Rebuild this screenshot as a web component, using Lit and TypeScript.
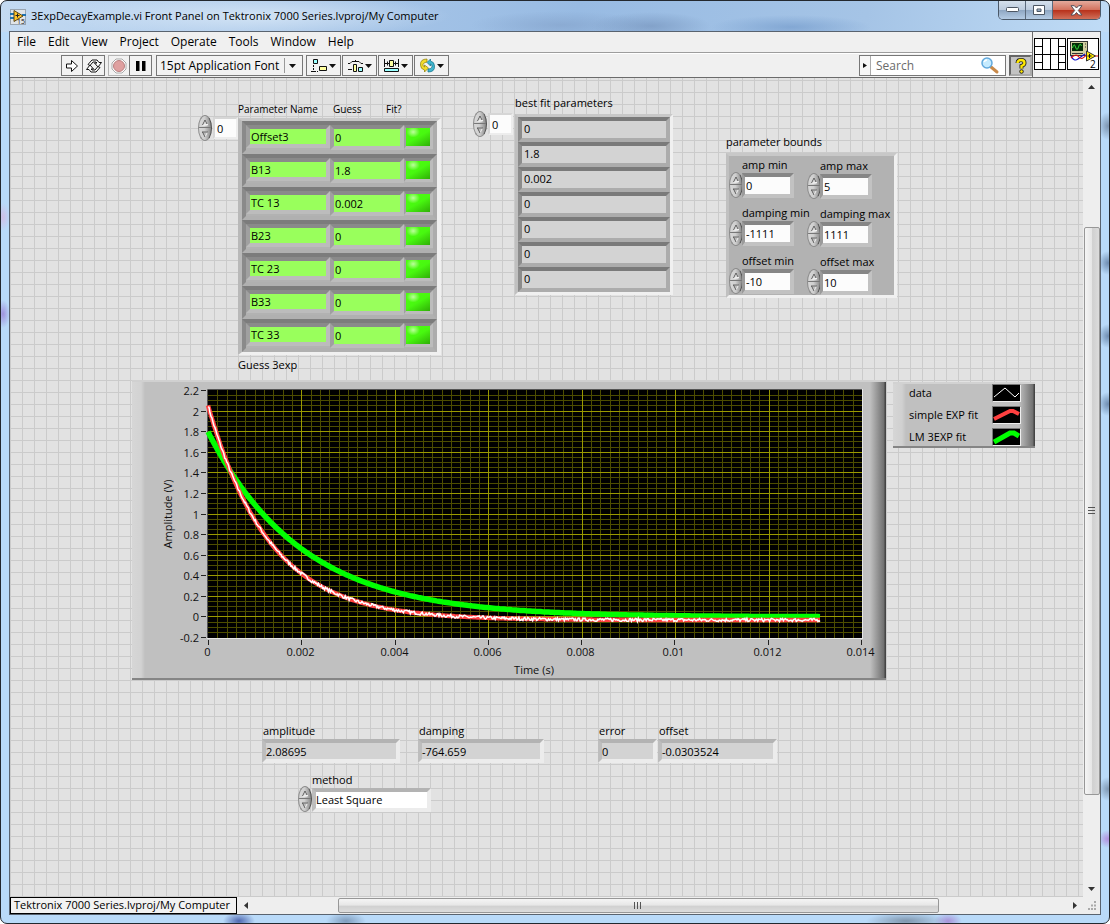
import { LitElement, html, css, svg } from "lit";
import { customElement, property } from "lit/decorators.js";

/* ---------- shared control looks ---------- */
const controls = css`
  * { box-sizing: border-box; }
  button, input, select, output, label, a {
    font: inherit;
    color: inherit;
  }
  button { padding: 0; margin: 0; border: 0; background: none; display: block; }
  input, select { appearance: none; border-radius: 0; margin: 0; outline: none; min-width: 0; }
`;

/* ---------- increment / decrement knob ---------- */
@customElement("spin-knob")
export class SpinKnob extends LitElement {
  @property() name = "";
  static styles = [controls, css`
    :host { display: block; width: 14px; height: 26px; flex: none; }
    .knob {
      width: 14px; height: 26px; border-radius: 50%;
      background: linear-gradient(90deg, #d8d8d8, #cfcfcf 45%, #8a8a8a);
      border: 1px solid #8b8b8b;
      border-right-color: #4e4e4e;
      overflow: hidden;
    }
    button { width: 12px; height: 12px; }
    .up { border-bottom: 1px solid #777; }
    svg { display: block; margin: auto; }
  `];
  render() {
    return html`<div class="knob">
      <button class="up" aria-label="Increase ${this.name}">
        <svg width="8" height="8"><path d="M1.5 7 4 2l2.500 5z" fill="#d9d9d9" stroke="#fff" /><path d="M1.500 7 4 2l2 4" fill="none" stroke="#555" /></svg>
      </button>
      <button aria-label="Decrease ${this.name}">
        <svg width="8" height="8"><path d="M1.500 2h5L4 7z" fill="#bbb" stroke="#eee" /><path d="M1 2h6M1.500 2 4 7" fill="none" stroke="#555" /></svg>
      </button>
    </div>`;
  }
}

/* ---------- knob with a numeric box (array index) ---------- */
@customElement("index-box")
export class IndexBox extends LitElement {
  @property() name = "";
  static styles = [controls, css`
    :host { display: flex; align-items: center; gap: 1px; }
    input {
      width: 25px; height: 22px; padding: 0 0 0 2px;
      background: #fcfcfc;
      border: 2px solid #d6d6d6;
      border-right-color: #ededed; border-bottom-color: #ededed;
    }
  `];
  render() {
    return html`<spin-knob name=${this.name}></spin-knob><input aria-label=${this.name} value="0" />`;
  }
}

/* ---------- waveform graph ---------- */
const PLOT = { x: 76, y: 10, w: 654, h: 248 };
const xPos = (t: number) => PLOT.x + (t / 0.014) * PLOT.w;
const yPos = (v: number) => PLOT.y + 0.5 + ((2.2 - v) / 2.4) * (PLOT.h - 1);
const T_END = 0.0131;

function curve(fn: (t: number) => number, steps: number): string {
  let d = "";
  for (let i = 0; i <= steps; i++) {
    const t = (T_END * i) / steps;
    d += `${i ? "L" : "M"}${xPos(t).toFixed(1)} ${yPos(fn(t)).toFixed(1)}`;
  }
  return d;
}
const simpleFit = (t: number) => 2.08695 * Math.exp(-764.659 * t) - 0.0303524;
const lmFit = (t: number) => 1.8 * Math.exp(-t / 0.002);
let seed = 7;
const noise = () => {
  seed = (seed * 16807) % 2147483647;
  return (seed / 2147483647 - 0.5) * 0.032;
};

@customElement("decay-graph")
export class DecayGraph extends LitElement {
  static styles = css`
    :host { display: block; }
    .case {
      width: 754px;
      background: linear-gradient(90deg, #d6d6d6, #d2d2d2 9px, #c0c0c0 13px, #c0c0c0 738px, #6f6f6f 752px, #444 753px);
      border-top: 2px solid #d0d0d0;
      border-bottom: 2px solid #858585;
    }
    svg { display: block; margin-top: -2px; margin-bottom: -2px; }
    text { font-size: 11px; fill: #111; }
  `;
  render() {
    const grid: unknown[] = [];
    for (let i = 0; i <= 70; i++) {
      const x = Math.round(PLOT.x + (i * PLOT.w) / 70) + 0.5;
      if (i % 10) grid.push(svg`<path d="M${x} ${PLOT.y}v${PLOT.h}" stroke="#4d4d00" />`);
    }
    for (let j = 1; j < 48; j++) {
      const y = Math.floor(yPos(2.2 - j * 0.05)) + 0.5;
      if (j % 4) grid.push(svg`<path d="M${PLOT.x} ${y}h${PLOT.w}" stroke="#4d4d00" />`);
    }
    for (let i = 1; i < 7; i++) {
      const x = Math.round(PLOT.x + (i * PLOT.w) / 7) + 0.5;
      grid.push(svg`<path d="M${x} ${PLOT.y}v${PLOT.h}" stroke="#999900" />`);
    }
    for (let j = 1; j < 12; j++) {
      const y = Math.floor(yPos(2.2 - j * 0.2)) + 0.5;
      grid.push(svg`<path d="M${PLOT.x} ${y}h${PLOT.w}" stroke="#999900" />`);
    }
    const yTicks = ["2.2", "2", "1.8", "1.6", "1.4", "1.2", "1", "0.8", "0.6", "0.4", "0.2", "0", "-0.2"];
    const xTicks = ["0", "0.002", "0.004", "0.006", "0.008", "0.01", "0.012", "0.014"];
    seed = 7;
    return html`<div class="case"><svg width="754" height="300" role="img" aria-label="Amplitude against time">
      <rect x=${PLOT.x - 1} y=${PLOT.y - 1} width=${PLOT.w + 2} height=${PLOT.h + 2} fill="#e6e6e6" />
      <path d="M${PLOT.x - 0.5} ${PLOT.y + PLOT.h}V${PLOT.y - 0.5}H${PLOT.x + PLOT.w}" fill="none" stroke="#555" />
      <rect x=${PLOT.x} y=${PLOT.y} width=${PLOT.w} height=${PLOT.h} fill="#000" />
      <g shape-rendering="crispEdges">${grid}</g>
      <path d=${curve(lmFit, 300)} fill="none" stroke="#00ff00" stroke-width="5.500" />
      <path d=${curve(simpleFit, 300)} fill="none" stroke="#ff4040" stroke-width="4.500" />
      <path d=${curve((t) => simpleFit(t) + noise(), 620)} fill="none" stroke="#fff" stroke-width="1.500" />
      ${yTicks.map((t, i) => {
        const y = Math.floor(yPos(2.2 - i * 0.2)) + 0.5;
        return svg`<path d="M69 ${y}h5" stroke="#222" /><text x="67" y=${y + 4} text-anchor="end">${t}</text>`;
      })}
      ${xTicks.map((t, i) => {
        const x = Math.round(PLOT.x + (i * (PLOT.w - 1)) / 7) + 0.5;
        return svg`<path d="M${x} 260v5" stroke="#222" /><text x=${x - 1} y="276" text-anchor="middle">${t}</text>`;
      })}
      <text x="402" y="294" text-anchor="middle">Time (s)</text>
      <text transform="translate(40 134) rotate(-90)" text-anchor="middle">Amplitude (V)</text>
    </svg></div>`;
  }
}

/* ---------- front panel ---------- */
@customElement("front-panel")
export class FrontPanel extends LitElement {
  static styles = [controls, css`
    :host {
      display: block; flex: 1; min-width: 0; overflow: hidden;
      background-color: #e2e2e2;
      background-image: linear-gradient(90deg, #cbcbcb 1px, transparent 1px), linear-gradient(#cbcbcb 1px, transparent 1px);
      background-size: 12px 12px;
      background-position: 0 2px;
    }
    .row { display: flex; align-items: flex-start; }
    .caption { display: block; height: 16px; line-height: 16px; white-space: nowrap; }

    .top { padding: 17px 0 0 188px; }
    .guess { display: flex; margin-top: 6px; width: 275px; }
    .guess index-box { margin-top: 14px; align-self: flex-start; }
    .heads { display: grid; grid-template-columns: 95px 53px auto; margin-bottom: 1px; font-size: 10px; }
    .bestfit { display: flex; gap: 2px; width: 253px; }
    .bestfit index-box { margin-top: 16px; align-self: flex-start; }
    .bestfit .caption, .bounds > .caption { margin-bottom: 3px; }

    .frame {
      border: 3px solid #d4d4d4;
      border-left-color: #c0c0c0; border-top-color: #c8c8c8;
      border-right-color: #f0f0f0; border-bottom-color: #f0f0f0;
      background: #b2b2b2;
    }
    .frame.wide { border-left-width: 4px; border-left-color: #b9b9b9; border-right-width: 4px; }
    .cluster {
      display: flex; align-items: flex-start; height: 33px; width: 195px;
      border: 4px solid #acacac;
      border-top-color: #7c7c7c; border-left-color: #8a8a8a;
      border-bottom-color: #b0b0b0;
    }
    .cluster input {
      border: 4px solid #bcbcbc;
      border-top-color: #8a8a8a; border-left-color: #a0a0a0;
    }
    .text, .num { background: #99ff5c; padding: 0 0 0 1px; line-height: 14px; }
    .text { width: 84px; height: 23px; }
    .num { width: 74px; height: 25px; }
    .cluster .led {
      width: 29px; height: 24px; border-width: 3px 3px 3px 2px;
      background:
        radial-gradient(ellipse at 30% 22%, rgba(200, 255, 170, 0.9), transparent 28%),
        linear-gradient(150deg, #4dff10, #48f810 50%, #2fae06);
    }
    .after { margin-top: 2px; }

    .result {
      display: block; width: 152px; height: 25px; line-height: 16px; padding-left: 2px;
      border: 4px solid #acacac; border-top-color: #7a7a7a; border-left-color: #8c8c8c;
      background: #d3d3d3;
    }

    .bounds { margin-top: 39px; }
    .pairs {
      display: grid; grid-template-columns: 78px 87px; align-items: start;
      height: 145px; padding-top: 1px; grid-auto-rows: 48px;
    }
    .pairs > .field:nth-child(even) { margin-top: 1px; }
    .field { display: grid; grid-template-columns: 13px 52px; }
    .field .caption { grid-column: 2; }
    .field spin-knob { margin-top: -1px; }
    .field input {
      height: 25px; width: 52px; padding: 0 0 0 1px; background: #fcfcfc;
      border: 4px solid #c2c2c2; border-top-color: #868686; border-left: 3px solid #9b9b9b;
    }

    .middle { padding: 7px 0 0 122px; gap: 7px; }
    .legend {
      margin-top: 2px; width: 142px; height: 66px; padding: 0 14px 0 16px;
      display: flex; flex-direction: column;
      background: linear-gradient(90deg, #d6d6d6, #d0d0d0 9px, #c0c0c0 13px, #c0c0c0 126px, #707070 140px, #444 141px);
      border-top: 2px solid #d2d2d2; border-bottom: 2px solid #858585;
    }
    .plot { display: flex; justify-content: space-between; align-items: center; height: 22px; padding-bottom: 4px; }
    .plot svg { display: block; border: 1px solid #777; border-right-color: #eee; border-bottom-color: #eee; background: #000; flex: none; }

    .readouts { padding: 43px 0 0 252px; }
    .readout .caption { padding-left: 1px; }
    .sink {
      display: block; height: 24px; line-height: 17px;
      border: 4px solid #ececec; border-top-color: #b3b3b3; border-left-color: #bdbdbd;
      background: #d3d3d3; white-space: nowrap;
    }
    .amp { width: 138px; margin-right: 18px; }
    .damp { width: 126px; margin-right: 54px; }
    .err { width: 59px; margin-right: 1px; }
    .off { width: 119px; }
    .method { display: grid; grid-template-columns: 14px 119px; padding: 9px 0 0 288px; }
    .method .caption { grid-column: 2; }
    .method spin-knob { margin-top: -2px; }
    .method select {
      height: 24px; padding: 0; background: #fff;
      border: 4px solid #ececec; border-top-color: #b3b3b3; border-left-color: #bdbdbd;
    }
  `];

  private field(id: string, name: string, value: string) {
    return html`<div class="field">
      <label class="caption" for=${id}>${name}</label>
      <spin-knob name=${name}></spin-knob><input id=${id} value=${value} />
    </div>`;
  }
  private readout(cls: string, name: string, value: string) {
    return html`<div class="readout ${cls}">
      <label class="caption" for=${cls}>${name}</label><output class="sink" id=${cls}>${value}</output>
    </div>`;
  }

  render() {
    const params = [["Offset3", "0"], ["B13", "1.8"], ["TC 13", "0.002"], ["B23", "0"], ["TC 23", "0"], ["B33", "0"], ["TC 33", "0"]];
    const best = ["0", "1.8", "0.002", "0", "0", "0", "0"];
    return html`
      <div class="row top">
        <section class="guess">
          <index-box name="Guess index"></index-box>
          <div>
            <div class="heads">
              <span class="caption" id="h-name">Parameter Name</span>
              <span class="caption" id="h-guess">Guess</span>
              <span class="caption" id="h-fit">Fit?</span>
            </div>
            <div class="frame wide">
              ${params.map(([n, g]) => html`<div class="cluster">
                <input class="text" aria-labelledby="h-name" value=${n} />
                <input class="num" aria-labelledby="h-guess" value=${g} />
                <input class="led" type="checkbox" aria-labelledby="h-fit" checked />
              </div>`)}
            </div>
            <span class="caption after">Guess 3exp</span>
          </div>
        </section>

        <section class="bestfit">
          <index-box name="Best fit index"></index-box>
          <div>
            <span class="caption">best fit parameters</span>
            <div class="frame">${best.map((v) => html`<output class="result">${v}</output>`)}</div>
          </div>
        </section>

        <section class="bounds">
          <span class="caption">parameter bounds</span>
          <div class="frame pairs">
            ${this.field("amin", "amp min", "0")}${this.field("amax", "amp max", "5")}
            ${this.field("dmin", "damping min", "-1111")}${this.field("dmax", "damping max", "1111")}
            ${this.field("omin", "offset min", "-10")}${this.field("omax", "offset max", "10")}
          </div>
        </section>
      </div>

      <div class="row middle">
        <decay-graph></decay-graph>
        <div class="legend">
          <div class="plot"><span>data</span>
            <svg width="29" height="18"><path d="M1 12 12 3l10 9 4-4" fill="none" stroke="#fff" /></svg></div>
          <div class="plot"><span>simple EXP fit</span>
            <svg width="29" height="18"><path d="M1 12 17 4h3l6 3" fill="none" stroke="#ff4040" stroke-width="4" /></svg></div>
          <div class="plot"><span>LM 3EXP fit</span>
            <svg width="29" height="18"><path d="M1 13 17 4h4l5 3" fill="none" stroke="#00ff00" stroke-width="5" /></svg></div>
        </div>
      </div>

      <div class="row readouts">
        ${this.readout("amp", "amplitude", "2.08695")}
        ${this.readout("damp", "damping", "-764.659")}
        ${this.readout("err", "error", "0")}
        ${this.readout("off", "offset", "-0.0303524")}
      </div>
      <div class="method">
        <label class="caption" for="method">method</label>
        <spin-knob name="method"></spin-knob>
        <select id="method"><option>Least Square</option><option>Least Absolute Residual</option><option>Bisquare</option></select>
      </div>`;
  }
}

/* ---------- application window ---------- */
@customElement("app-root")
export class AppRoot extends LitElement {
  static styles = [controls, css`
    :host {
      display: flex; flex-direction: column; height: 100vh; min-width: 0;
      font: 11px/16px "Open Sans", "Noto Sans", sans-serif;
      color: #000; box-sizing: border-box;
      padding: 0 8px 8px;
      border: 1px solid #23282e;
      border-radius: 7px;
      background:
        radial-gradient(ellipse 10px 14px at 1107px 125px, #7d95b0, transparent),
        radial-gradient(ellipse 10px 12px at 1107px 262px, #6f8db0, transparent),
        radial-gradient(ellipse 10px 12px at 1107px 335px, #6f8db0, transparent),
        radial-gradient(ellipse 10px 12px at 1107px 403px, #6f8db0, transparent),
        radial-gradient(ellipse 10px 12px at 1107px 788px, #8098b3, transparent),
        radial-gradient(ellipse 10px 9px at 1107px 838px, #b190dd, transparent),
        radial-gradient(ellipse 7px 14px at 2px 313px, #9f93dd, transparent),
        radial-gradient(ellipse 7px 14px at 2px 216px, #cfc0e6, transparent),
        radial-gradient(ellipse 16px 9px at 238px 920px, #5068b0, transparent),
        radial-gradient(ellipse 20px 9px at 345px 920px, #7f9cbc, transparent),
        radial-gradient(ellipse 40px 9px at 905px 920px, #8096ad, transparent),
        radial-gradient(ellipse 14px 8px at 947px 920px, #a892d8, transparent),
        radial-gradient(ellipse 200px 22px at 250px 15px, rgba(214, 230, 246, 0.9), transparent),
        radial-gradient(ellipse 60px 14px at 650px 25px, rgba(120, 150, 190, 0.7), transparent),
        radial-gradient(ellipse 90px 14px at 560px 24px, rgba(130, 160, 200, 0.6), transparent),
        radial-gradient(ellipse 80px 12px at 790px 26px, rgba(110, 150, 200, 0.6), transparent),
        linear-gradient(100deg, #c3daf2 0, #a8c6e8 30%, #98bbe3 52%, #a5c4e6 78%, #c0dcf6 100%) 0 0 / 100% 31px no-repeat,
        #b9daf9;
    }
    .title { display: flex; align-items: flex-start; height: 30px; flex: none; }
    .title svg { display: block; }
    .vi { margin: 8px 5px 0 1px; }
    .title h1 { margin: 7px 0 0; font-size: 11px; line-height: 16px; font-weight: 400; white-space: nowrap; flex: 1; }
    .wbtns { display: flex; height: 19px; border: 1px solid #4a5868; border-top: 0; border-radius: 0 0 5px 5px; overflow: hidden; }
    .wbtns button {
      width: 27px; border-right: 1px solid #5b6a7c; display: grid; place-items: center;
      background: linear-gradient(#d5e0ec, #bccbdd 48%, #8fa7c3 52%, #b4cbe4);
    }
    .wbtns .close { width: 47px; border-right: 0; background: linear-gradient(#e4aa9c, #d4735f 48%, #b8321c 52%, #d0705a); }

    .client { flex: 1; min-height: 0; display: flex; flex-direction: column; border: 1px solid #59636f; background: #f0f0f0; }
    .head { display: flex; height: 46px; flex: none; border-bottom: 1px solid #6b6b6b; }
    .bars { flex: 1; min-width: 0; border-right: 1px solid #6b6b6b; }
    .menu { display: flex; height: 21px; padding-left: 7px; gap: 12px; border-bottom: 1px solid #9d9d9d; font-size: 12px; }
    .menu button { line-height: 18px; }
    .tools { display: flex; height: 24px; padding: 1px 0 0 51px; align-items: flex-start; border-top: 1px solid #fff; }
    .tools button, .font, .find { height: 21px; border: 1px solid #777; background: #f2f2f2; display: flex; align-items: center; justify-content: center; }
    .tools button { width: 22px; }
    .tools .second { margin-left: -1px; width: 23px; }
    .tools .off { margin-left: 3px; border-color: #b5b5b5; }
    .font { margin: 0 3px 0 4px; width: 147px; position: relative; }
    .font select { width: 100%; height: 19px; border: 0; background: none; padding: 0 0 0 3px; font-size: 12px; }
    .font svg { position: absolute; right: 5px; top: 2px; pointer-events: none; }
    .tools .drop { width: 35px; margin-right: 1px; gap: 1px; }
    .find { margin-left: auto; width: 147px; justify-content: flex-start; background: #f6f6f6; }
    .find input { flex: 1; height: 19px; border: 0; border-left: 1px solid #aaa; background: #fff; font-size: 12px; padding: 0 0 0 5px; margin-left: 2px; }
    .find input::placeholder { color: #6b6b6b; opacity: 1; }
    .find .glass { background: #fff; height: 19px; width: 26px; }
    .tools .help { margin-left: 3px; width: 23px; background: #c3c3c3; border: 2px solid #666; border-right-color: #aaa; border-bottom-color: #aaa; }
    .panes { display: flex; gap: 1px; padding: 6px 0 0 1px; width: 67px; }
    .panes svg { display: block; }

    .body { flex: 1; min-height: 0; display: flex; }
    .vbar { width: 17px; flex: none; display: flex; flex-direction: column; align-items: center; background: #eee; }
    .vbar button { height: 17px; width: 17px; display: grid; place-items: center; }
    .vtrack { flex: 1; display: flex; flex-direction: column; width: 16px; }
    .space-a { flex: 132; }
    .space-b { flex: 85; }
    .vthumb {
      flex: 566; border: 1px solid #979797; border-radius: 2px; display: grid; place-items: center;
      background: linear-gradient(90deg, #f5f5f5, #e6e6e6 48%, #d0d0d0 54%, #dcdcdc);
    }
    .foot { display: flex; height: 17px; flex: none; background: #eee; }
    .project { border: 1px solid #000; width: 227px; padding-left: 3px; line-height: 14px; white-space: nowrap; text-decoration: none; background: #f2f2f2; }
    .foot button { width: 17px; display: grid; place-items: center; }
    .htrack { flex: 1; display: flex; padding: 1px 0; }
    .hl { flex: 84; }
    .hr { flex: 128; }
    .hthumb {
      flex: 602; border: 1px solid #979797; border-radius: 2px; display: grid; place-items: center;
      background: linear-gradient(#f5f5f5, #e6e6e6 48%, #d0d0d0 54%, #dcdcdc);
    }
    .grip { width: 17px; display: grid; place-items: center; }
  `];

  private caret() {
    return html`<svg width="7" height="4"><path d="M0 0h7L3.500 4z" fill="#111" /></svg>`;
  }

  render() {
    const menus = ["File", "Edit", "View", "Project", "Operate", "Tools", "Window", "Help"];
    return html`
      <header class="title">
        <svg class="vi" width="16" height="16">
          <rect x=".5" y=".5" width="15" height="15" fill="#dfe4e8" stroke="#9aa5b0" /><path d="M0 5h4M0 9h4M12 6h4" stroke="#1d74b5" stroke-width="2" />
          <path d="M4 1.500v11l9-5.500z" fill="#ffc629" stroke="#5a4413" /><path d="M5.500 6.500h4M7.500 4.500v4" stroke="#222" />
          <text x="7" y="15" font-size="7" fill="#111">15</text>
        </svg>
        <h1>3ExpDecayExample.vi Front Panel on Tektronix 7000 Series.lvproj/My Computer</h1>
        <div class="wbtns">
          <button aria-label="Minimize"><svg width="13" height="6"><rect x=".5" y=".5" width="12" height="4" rx="1" fill="#fff" stroke="#4c5663" /></svg></button>
          <button aria-label="Maximize"><svg width="13" height="11"><path fill-rule="evenodd" d="M.5.5h11v9H.5zM4 4v2.500h4V4z" fill="#fff" stroke="#4c5663" /></svg></button>
          <button class="close" aria-label="Close"><svg width="13" height="11"><path d="M1 .7h3.300L6.500 3 8.700.7H12L8.300 5.500 12 10H8.700L6.500 7.500 4.300 10H1l3.700-4.500z" fill="#fff" stroke="#54505a" /></svg></button>
        </div>
      </header>
      <main class="client">
        <div class="head">
          <div class="bars">
            <nav class="menu">${menus.map((m) => html`<button>${m}</button>`)}</nav>
            <div class="tools">
              <button aria-label="Run"><svg width="14" height="14"><path d="M1.500 5h5V1.500L12.500 7l-6 5.500V9h-5z" fill="#fff" stroke="#111" /></svg></button>
              <button class="second" aria-label="Run continuously"><svg width="18" height="16">
                <path d="M3 6.500 7 2h5l2 2.500h2.500L13 9 9.500 5H12l-1-1H8L5 7.500z" fill="#fff" stroke="#111" />
                <path d="M15 9.500 11 14H6l-2-2.500H1.500L5 7l3.500 4H6l1 1h3l3-3.500z" fill="#fff" stroke="#111" /></svg></button>
              <button class="off" aria-label="Abort"><svg width="16" height="16"><path d="M5 1h6l4 4v6l-4 4H5l-4-4V5z" fill="#fff" stroke="#aaa" /><circle cx="8" cy="8" r="5.500" fill="#dfa0a0" stroke="#b98080" /></svg></button>
              <button class="second" aria-label="Pause"><svg width="10" height="12"><path d="M0 1h3.500v10H0zM6 1h3.500v10H6z" fill="#000" /></svg></button>
              <div class="font">
                <select aria-label="Text settings"><option>15pt Application Font</option></select>
                <svg width="13" height="15"><path d="M.5 0v15" stroke="#999" /><path d="M5 6h7l-3.500 4z" fill="#111" /></svg>
              </div>
              <button class="drop" aria-label="Align"><svg width="17" height="14">
                <path d="M2.500.5h4v4h-4z" fill="#9ff" stroke="#111" /><path d="M8.500 7.500h7v4h-7z" fill="#ffffa0" stroke="#111" /><path d="M2.500 6v7M0 12.500h7" stroke="#111" stroke-dasharray="2 1" /></svg>${this.caret()}</button>
              <button class="drop" aria-label="Distribute"><svg width="17" height="14">
                <path d="M1 4.500h2l2-2h7l2 2h2M8.500 1v2" fill="none" stroke="#111" /><path d="M6.500 5.500h3v7h-3z" fill="#ffffa0" stroke="#111" /><path d="M11.500 8.500h4v4h-4z" fill="#9ff" stroke="#111" /><path d="M1 10.500h4" stroke="#111" /></svg>${this.caret()}</button>
              <button class="drop" aria-label="Resize"><svg width="17" height="14">
                <path d="M1.500 0v8M15.500 0v8M2 4.500h4M11 4.500h4M4.500 2.500v4M12.500 2.500v4" stroke="#111" /><path d="M6.500 1.500h4v6h-4z" fill="#ffffa0" stroke="#111" /><path d="M1.500 9.500h14v3h-14z" fill="#9ff" stroke="#111" /></svg>${this.caret()}</button>
              <button class="drop" aria-label="Reorder"><svg width="17" height="15">
                <path d="M8 1Q1 1 1.500 7q0 4 4 5v2l4-4-4-3v2Q3.500 8 4 6.500 5 4 8 4z" fill="#f2dc2c" stroke="#8b7b00" stroke-width=".7" />
                <path d="M9 14q7 0 6.500-6 0-4-4-5V1L8 4.500 11.500 8V6q2 .5 1.500 3-.500 2-4 2z" fill="#3fb6cf" stroke="#136f86" stroke-width=".7" /></svg>${this.caret()}</button>
              <div class="find">
                <svg width="8" height="9"><path d="M3 2v5l4-2.500z" fill="#111" /></svg>
                <input type="search" aria-label="Search" placeholder="Search" />
                <svg class="glass" viewBox="0 0 26 19"><path d="m12 11 6 5" stroke="#c98a4a" stroke-width="3" stroke-linecap="round" /><circle cx="8" cy="7" r="5" fill="#c5ebff" stroke="#62a9dd" stroke-width="1.500" /><path d="M5 6q1-2 3-2" fill="none" stroke="#fff" stroke-width="1.500" /></svg>
              </div>
              <button class="help" aria-label="Context help"><svg width="14" height="16"><path d="M3.500 5Q3.500 2 7 2t3.500 3Q10.500 7 7.500 8v2.500" fill="none" stroke="#222" stroke-width="4" /><path d="M3.500 5Q3.500 2 7 2t3.500 3Q10.500 7 7.500 8v2.500" fill="none" stroke="#ffe800" stroke-width="2.300" /><circle cx="7.500" cy="13.500" r="1.800" fill="#ffe800" stroke="#222" /></svg></button>
            </div>
          </div>
          <div class="panes">
            <svg width="32" height="32" shape-rendering="crispEdges"><path d="M.5.5h31v31H.5zM8.500 0v32M16.500 0v32M24.500 0v32M0 16.500h32M0 8.500h8M0 24.500h8M24 8.500h8M24 24.500h8" fill="#fff" stroke="#000" /></svg>
            <svg width="32" height="32">
              <rect x=".5" y=".5" width="31" height="31" fill="#fff" stroke="#000" />
              <rect x="3.500" y="3.500" width="17" height="14" fill="#d2cfa0" stroke="#333" /><rect x="5" y="5" width="11" height="8" fill="#042c08" />
              <path d="M5.500 10Q7 4 8.500 9t3 0 3-1" fill="none" stroke="#35e03c" /><path d="M18 6h1M18 9h1M5 15.500h11" stroke="#333" />
              <path d="M4 18q3 6 7 3t7-5" fill="none" stroke="#11c" stroke-width="1.200" /><path d="M4 20q5-5 8-1t8-3M27 18h4" fill="none" stroke="#d11" stroke-width="1.200" />
              <path d="M19.500 13v10l9-5z" fill="#ffe800" stroke="#333" /><path d="M20.500 18h4M22.500 16v4" stroke="#111" />
              <text x="23" y="30" font-size="10" fill="#000">2</text>
            </svg>
          </div>
        </div>
        <div class="body">
          <front-panel></front-panel>
          <div class="vbar">
            <button aria-label="Scroll up"><svg width="7" height="4"><path d="M0 4h7L3.500 0z" fill="#333" /></svg></button>
            <div class="vtrack"><div class="space-a"></div>
              <div class="vthumb"><svg width="7" height="8"><path d="M0 .5h7M0 3.500h7M0 6.500h7" stroke="#555" /></svg></div>
              <div class="space-b"></div></div>
            <button aria-label="Scroll down"><svg width="7" height="4"><path d="M0 0h7L3.500 4z" fill="#333" /></svg></button>
          </div>
        </div>
        <footer class="foot">
          <a class="project" href="#project">Tektronix 7000 Series.lvproj/My Computer</a>
          <button aria-label="Scroll left"><svg width="4" height="7"><path d="M4 0v7L0 3.500z" fill="#333" /></svg></button>
          <div class="htrack"><div class="hl"></div>
            <div class="hthumb"><svg width="8" height="7"><path d="M.5 0v7M3.500 0v7M6.500 0v7" stroke="#555" /></svg></div>
            <div class="hr"></div></div>
          <button aria-label="Scroll right"><svg width="4" height="7"><path d="M0 0v7l4-3.500z" fill="#333" /></svg></button>
          <div class="grip"><svg width="10" height="10"><path d="M7 1h2M4 4.500h2M7 4.500h2M1 8h2M4 8h2M7 8h2" stroke="#aaa" stroke-width="2" /></svg></div>
        </footer>
      </main>`;
  }
}
